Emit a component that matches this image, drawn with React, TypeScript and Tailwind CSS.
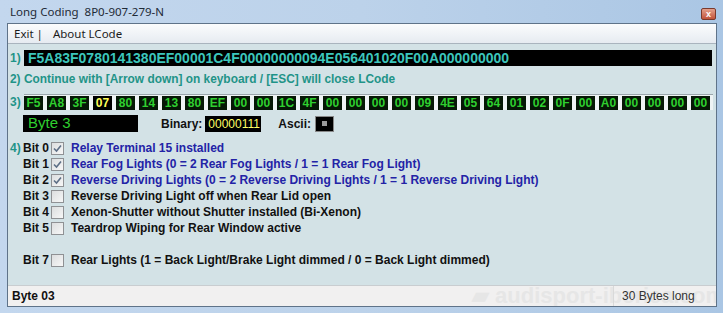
import React from 'react';

const bytes = [
  'F5', 'A8', '3F', '07', '80', '14', '13', '80', 'EF', '00',
  '00', '1C', '4F', '00', '00', '00', '00', '09', '4E', '05',
  '64', '01', '02', '0F', '00', 'A0', '00', '00', '00', '00',
];

type Bit = { n: number; on: boolean; text: string } | null;

const bits: Bit[] = [
  { n: 0, on: true, text: 'Relay Terminal 15 installed' },
  { n: 1, on: true, text: 'Rear Fog Lights (0 = 2 Rear Fog Lights / 1 = 1 Rear Fog Light)' },
  { n: 2, on: true, text: 'Reverse Driving Lights (0 = 2 Reverse Driving Lights / 1 = 1 Reverse Driving Light)' },
  { n: 3, on: false, text: 'Reverse Driving Light off when Rear Lid open' },
  { n: 4, on: false, text: 'Xenon-Shutter without Shutter installed (Bi-Xenon)' },
  { n: 5, on: false, text: 'Teardrop Wiping for Rear Window active' },
  null,
  { n: 7, on: false, text: 'Rear Lights (1 = Back Light/Brake Light dimmed / 0 = Back Light dimmed)' },
];

function CheckBox({ on }: { on: boolean }) {
  return (
    <span className="w-[13px] h-[13px] border border-[#8f9194] bg-gradient-to-br from-[#dcdedf] to-[#f7f7f7] flex items-center justify-center">
      {on && (
        <svg width="9" height="9" viewBox="0 0 9 9">
          <path d="M1 4.5 L3.5 7 L8 1.5" fill="none" stroke="#5d6f86" strokeWidth="1.6" />
        </svg>
      )}
    </span>
  );
}

export default function App() {
  const hex = bytes.join('');

  return (
    <div className="w-[723px] h-[313px] relative overflow-hidden bg-gradient-to-r from-[#c3d7ee] via-[#bcd2ea] to-[#aac6e4] pl-[7px] pr-[6px] pb-[6px] font-['Liberation_Sans',sans-serif]">
      {/* title bar */}
      <div className="h-[23px] flex items-center pl-[3px] relative">
        <span className="text-[11.5px] text-[#1e2a36] font-['Noto_Sans',sans-serif]">Long Coding&nbsp;&nbsp;8P0-907-279-N</span>
        <span className="absolute right-[1px] top-[8px] w-[15px] h-[12px] rounded-[2px] bg-gradient-to-b from-[#e3a08b] to-[#c2533a] border border-[#7a3a2c] flex items-center justify-center text-white text-[9px] font-bold leading-none">
          x
        </span>
      </div>

      {/* client area */}
      <div className="h-[284px] border border-[#5f7389] bg-[#d3e2e6] flex flex-col">
        {/* menu */}
        <div className="h-[20px] border-b border-[#a9b4be] bg-gradient-to-b from-[#fbfcfd] to-[#e6ebf1] flex items-center text-[11.5px] text-[#1b1b1b] font-['Noto_Sans',sans-serif]">
          <span className="pl-[6px]">Exit |</span>
          <span className="pl-[10px]">About LCode</span>
        </div>

        {/* content */}
        <div className="h-[241px] pt-[6px] pl-[2px] flex flex-col text-[12px] font-bold">
          <div className="flex items-center h-[16px]">
            <span className="w-[14px] text-[#1f9488]">1)</span>
            <div className="w-[688px] h-[16px] bg-black flex items-center pl-[4px] text-[14px] text-[#3cc6bc]">
              {hex}
            </div>
          </div>

          <div className="h-[14px] mt-[7px] flex items-center text-[#1f9488] text-[11.9px]">
            2) Continue with [Arrow down] on keyboard / [ESC] will close LCode
          </div>

          <div className="flex items-center h-[16px] mt-[7px]">
            <span className="w-[14px] text-[#1f9488]">3)</span>
            <div className="h-[16px] w-[689px] border-t border-[#9aa6ab] bg-[#eef3f4] flex gap-[4px] pt-[1px]">
              {bytes.map((b, i) => (
                <span
                  key={i}
                  className={
                    i === 3
                      ? 'w-[19px] h-[14px] bg-black text-[#ffff5a] flex items-center justify-center text-[12px]'
                      : 'w-[19px] h-[14px] bg-[#061806] text-[#2fcf2f] flex items-center justify-center text-[12px]'
                  }
                >
                  {b}
                </span>
              ))}
            </div>
          </div>

          <div className="flex items-center h-[17px] mt-[5px] pl-[13px]">
            <div className="w-[115px] h-[17px] bg-black text-[#2fcf2f] text-[15px] font-normal flex items-center pl-[5px]">
              Byte 3
            </div>
            <span className="ml-[23px] text-[#111]">Binary:</span>
            <div className="ml-[3px] w-[56px] h-[16px] bg-black text-[#ffff66] font-normal flex items-center pl-[3px]">
              00000111
            </div>
            <span className="ml-[17px] text-[#111]">Ascii:</span>
            <div className="ml-[4px] w-[19px] h-[16px] bg-black border border-[#888] flex items-center justify-center">
              <span className="w-[5px] h-[5px] bg-[#9a9a9a]" />
            </div>
          </div>

          <div className="mt-[8px] flex flex-col">
            {bits.map((bit, i) => (
              <div key={i} className="h-[16px] flex items-center">
                <span className="w-[13px] text-[#1f9488]">{i === 0 ? '4)' : ''}</span>
                {bit && (
                  <>
                    <span className="w-[28px] text-[#111]">Bit {bit.n}</span>
                    <CheckBox on={bit.on} />
                    <span className={bit.on ? 'ml-[7px] text-[#2323a6]' : 'ml-[7px] text-[#111]'}>{bit.text}</span>
                  </>
                )}
              </div>
            ))}
          </div>
        </div>

        {/* status bar */}
        <div className="h-[21px] border-t border-[#c9cdd0] bg-[#f1f0f0] flex items-center relative overflow-hidden">
          <span className="pl-[4px] text-[12px] font-bold text-[#111] w-[605px]">Byte 03</span>
          <span className="absolute left-[464px] top-[-1px] whitespace-nowrap text-[22px] font-bold text-[#e6e6e6] leading-none pointer-events-none">
            ▰ audisport-iberica.com
          </span>
          <span className="relative border-l border-[#d9d9d9] h-[21px] flex items-center pl-[8px] text-[12px] text-[#333]">
            30 Bytes long
          </span>
        </div>
      </div>
    </div>
  );
}
